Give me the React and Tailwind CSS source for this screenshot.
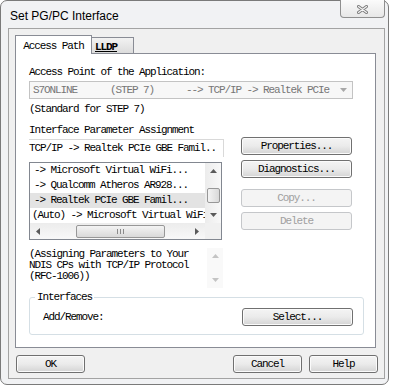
import React from 'react';

const mono = "font-['Liberation_Mono','Courier_New',monospace] text-[11px] tracking-[-1.1px] whitespace-pre";

const Button = ({ children, disabled = false, className = '' }) => (
  <div
    className={`flex h-[18px] items-center justify-center rounded-[3px] border ${mono} ${
      disabled
        ? 'border-[#c5c7ca] bg-[#f4f4f4] text-[#a0a0a0]'
        : 'border-[#707070] bg-linear-to-b from-[#f4f4f4] via-[#ebebeb] to-[#d4d4d4] text-black shadow-[inset_0_0_0_1px_#fbfbfb]'
    } ${className}`}
  >
    {children}
  </div>
);

const Up = ({ color = '#5a5a5a' }) => (
  <svg width="7" height="4" viewBox="0 0 7 4">
    <path d="M0 4 L3.5 0 L7 4 Z" fill={color} />
  </svg>
);
const Down = ({ color = '#5a5a5a' }) => (
  <svg width="7" height="4" viewBox="0 0 7 4">
    <path d="M0 0 L3.5 4 L7 0 Z" fill={color} />
  </svg>
);
const Left = () => (
  <svg width="4" height="7" viewBox="0 0 4 7">
    <path d="M4 0 L0 3.5 L4 7 Z" fill="#5a5a5a" />
  </svg>
);
const Right = () => (
  <svg width="4" height="7" viewBox="0 0 4 7">
    <path d="M0 0 L4 3.5 L0 7 Z" fill="#5a5a5a" />
  </svg>
);

const rows = [
  { text: '-> Microsoft Virtual WiFi...', pad: 'pl-[4px]' },
  { text: '-> Qualcomm Atheros AR928...', pad: 'pl-[4px]' },
  { text: '-> Realtek PCIe GBE Famil...', pad: 'pl-[4px]', selected: true },
  { text: '(Auto) -> Microsoft Virtual WiFi', pad: 'pl-[2px]' },
];

const App = () => {
  return (
    <div className="h-[386px] w-[393px] overflow-hidden bg-white">
      <div className="flex h-[385px] w-[389px] flex-col rounded-[7px] border border-[#7a7a7a] bg-[#f1f2f4]">
        {/* title bar */}
        <div className="flex h-[27px] items-start justify-between pl-[9px]">
          <span className="mt-[7px] font-['Liberation_Sans',Arial,sans-serif] text-[12px] leading-[16px] text-black">
            Set PG/PC Interface
          </span>
          <div className="-mt-px mr-[3px] flex h-[18px] w-[45px] items-center justify-center rounded-b-[4px] border-x border-b border-[#8f8f8f] bg-linear-to-b from-[#fbfbfb] to-[#e7e7e7] pt-[2px]">
            <svg width="11" height="9" viewBox="0 0 11 9">
              <path d="M1.5 1.5 L9.5 7.5 M9.5 1.5 L1.5 7.5" stroke="#7b7b7b" strokeWidth="3" strokeLinecap="round" />
              <path d="M1.5 1.5 L9.5 7.5 M9.5 1.5 L1.5 7.5" stroke="#f4f4f4" strokeWidth="1.2" strokeLinecap="round" />
            </svg>
          </div>
        </div>

        {/* client area */}
        <div className="mb-[5px] ml-[7px] mr-[3px] flex flex-1 flex-col border border-[#a3a3a3] bg-[#f0f0f0]">
          {/* tabs */}
          <div className="ml-[6px] mt-[6px] flex h-[18px] items-end">
            <div className={`relative z-10 -mb-px flex h-[19px] w-[77px] items-start justify-center border-x border-t border-[#898c95] bg-white pt-[2px] text-black ${mono}`}>
              Access Path
            </div>
            <div className="flex h-[16px] w-[42px] items-start border-r border-t border-[#898c95] bg-linear-to-b from-[#f2f2f2] to-[#dcdcdc] pl-[3px] pt-px">
              <span className={`${mono} font-bold underline`}>LLDP</span>
            </div>
          </div>

          {/* tab panel */}
          <div className="ml-[6px] flex h-[295px] w-[361px] flex-col border border-[#898c95] bg-white pl-[13px]">
            <div className={`mt-[11px] h-[14px] leading-[14px] ${mono}`}>Access Point of the Application:</div>
            <div className={`mt-[2px] flex h-[18px] w-[324px] items-center border border-[#c3c3c3] bg-[#f7f7f7] text-[#767676] ${mono}`}>
              <span className="w-[80px] pl-[3px]">S7ONLINE</span>
              <span className="w-[76px]">(STEP 7)</span>
              <span>--&gt; TCP/IP -&gt; Realtek PCIe</span>
              <span className="ml-auto mr-[5px] flex">
                <Down color="#a8a8a8" />
              </span>
            </div>
            <div className={`mt-[3px] h-[14px] leading-[14px] ${mono}`}>(Standard for STEP 7)</div>
            <div className={`mt-[7px] h-[14px] leading-[14px] ${mono}`}>Interface Parameter Assignment</div>

            <div className="flex">
              {/* left column */}
              <div className="flex w-[195px] flex-col">
                <div className={`mt-[2px] flex h-[18px] items-center border-r border-t border-[#d9d9d9] ${mono}`}>
                  TCP/IP -&gt; Realtek PCIe GBE Famil..
                </div>

                <div className="mt-[5px] flex h-[78px] w-[193px] flex-col border border-[#828790] bg-white">
                  <div className="flex h-[60px]">
                    <div className="flex-1 overflow-hidden">
                      {rows.map((r) => (
                        <div
                          key={r.text}
                          className={`flex h-[15px] items-center ${r.pad} ${mono} ${r.selected ? 'bg-[#e3e3e3]' : ''}`}
                        >
                          {r.text}
                        </div>
                      ))}
                    </div>
                    <div className="flex w-[16px] flex-col items-center bg-linear-to-r from-[#ececec] to-[#f8f8f8]">
                      <div className="flex h-[16px] items-center">
                        <Up />
                      </div>
                      <div className="mt-[9px] h-[15px] w-[13px] rounded-[2px] border border-[#979797] bg-linear-to-r from-[#f4f4f4] to-[#d9d9d9]" />
                      <div className="flex-1" />
                      <div className="flex h-[16px] items-center">
                        <Down />
                      </div>
                    </div>
                  </div>
                  <div className="flex h-[16px]">
                    <div className="flex flex-1 items-center bg-linear-to-b from-[#ececec] to-[#f8f8f8]">
                      <div className="flex w-[16px] justify-center">
                        <Left />
                      </div>
                      <div className="ml-[30px] flex h-[13px] w-[89px] items-center justify-center rounded-[2px] border border-[#979797] bg-linear-to-b from-[#f4f4f4] to-[#d9d9d9]">
                        <svg width="7" height="5" viewBox="0 0 7 5">
                          <path d="M0.5 0 V5 M3.5 0 V5 M6.5 0 V5" stroke="#8a8a8a" strokeWidth="1" />
                        </svg>
                      </div>
                      <div className="flex-1" />
                      <div className="flex w-[16px] justify-center">
                        <Right />
                      </div>
                    </div>
                    <div className="w-[16px] bg-[#f0f0f0]" />
                  </div>
                </div>

                <div className="mt-[8px] flex h-[40px]">
                  <div className={`w-[178px] pt-px leading-[11px] ${mono}`}>
                    <div>(Assigning Parameters to Your</div>
                    <div>NDIS CPs with TCP/IP Protocol</div>
                    <div>(RFC-1006))</div>
                  </div>
                  <div className="flex w-[16px] flex-col items-center bg-[#f9f9f9]">
                    <div className="flex h-[16px] items-center">
                      <Up color="#c4c4c4" />
                    </div>
                    <div className="flex-1" />
                    <div className="flex h-[16px] items-center">
                      <Down color="#c4c4c4" />
                    </div>
                  </div>
                </div>
              </div>

              {/* right column */}
              <div className="ml-[17px] flex w-[111px] flex-col">
                <Button>Properties...</Button>
                <Button className="mt-[5px]">Diagnostics...</Button>
                <Button disabled className="mt-[11px]">Copy...</Button>
                <Button disabled className="mt-[5px]">Delete</Button>
              </div>
            </div>

            <fieldset className="mt-[2px] w-[335px] rounded-[3px] border border-[#d5dfe5] pb-[8px] pl-[13px] pr-[10px]">
              <legend className={`ml-[-8px] px-[2px] leading-[14px] ${mono}`}>Interfaces</legend>
              <div className="mt-[4px] flex items-center justify-between">
                <span className={mono}>Add/Remove:</span>
                <Button className="w-[111px]">Select...</Button>
              </div>
            </fieldset>
          </div>

          {/* bottom buttons */}
          <div className="ml-[7px] mr-[6px] mt-[7px] flex">
            <Button className="w-[69px]">OK</Button>
            <div className="flex-1" />
            <Button className="w-[69px]">Cancel</Button>
            <Button className="ml-[7px] w-[69px]">Help</Button>
          </div>
        </div>
      </div>
    </div>
  );
};

export default App;
